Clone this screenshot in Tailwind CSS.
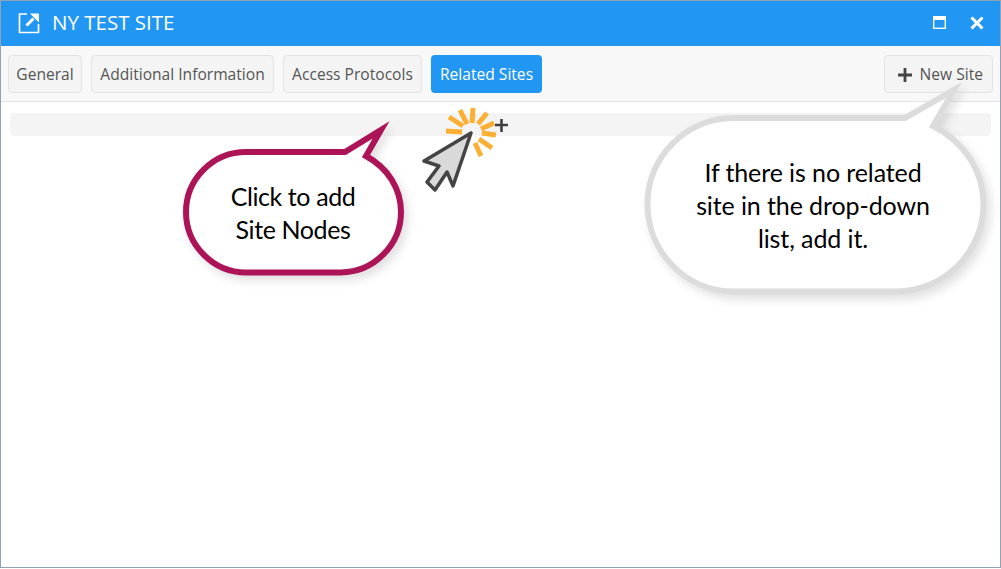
<!DOCTYPE html>
<html lang="en">
<head>
  <meta charset="UTF-8" />
  <title>NY TEST SITE</title>
  <script src="https://cdn.jsdelivr.net/npm/@tailwindcss/browser@4"></script>
</head>
<body class="bg-white font-['Open_Sans',sans-serif]">
  <div class="relative w-[1001px] h-[568px] overflow-hidden border border-[#8ea3b5] bg-white">
    <!-- Title bar -->
    <div class="flex items-center h-[45px] bg-[#2196f3] text-white pl-[17px] pr-[16px] pb-[2px]">
      <svg class="w-[22px] h-[22px]" viewBox="0 0 22 22" fill="none" stroke="#fff" stroke-width="1.7">
        <path d="M9 2H1.500V20.500H20.500V12" />
        <path d="M8.500 13.500L15.500 6.500" stroke-width="3" />
        <path d="M12 1.500H21V10.500Z" fill="#fff" stroke="none" />
      </svg>
      <span class="ml-[12px] text-[20.5px]">NY TEST SITE</span>
      <div class="ml-auto flex items-center gap-[24px]">
        <svg class="w-[13px] h-[13px]" viewBox="0 0 13 13" fill="none" stroke="#fff">
          <rect x="0.700" y="0.700" width="11.600" height="11.600" stroke-width="1.400" />
          <path d="M0.700 2.500H12.300" stroke-width="3" />
        </svg>
        <svg class="w-[14px] h-[14px]" viewBox="0 0 14 14" fill="none" stroke="#fff" stroke-width="3">
          <path d="M1.500 1.500L12.500 12.500M12.500 1.500L1.500 12.500" />
        </svg>
      </div>
    </div>

    <!-- Tabs -->
    <div class="flex items-center h-[56px] bg-[#f8f8f8] border-b border-[#e5e5e5] pl-[7px] pr-[7px] text-[15.6px] text-[#555]">
      <div class="flex gap-[9px]">
        <button class="h-[38px] w-[74px] pt-[2px] rounded-[4px] border border-[#e3e3e3] bg-[#f4f4f4]">General</button>
        <button class="h-[38px] w-[183px] pt-[2px] rounded-[4px] border border-[#e3e3e3] bg-[#f4f4f4]">Additional Information</button>
        <button class="h-[38px] w-[139px] pt-[2px] rounded-[4px] border border-[#e3e3e3] bg-[#f4f4f4]">Access Protocols</button>
        <button class="h-[38px] w-[111px] pt-[2px] rounded-[4px] bg-[#2196f3] text-white">Related Sites</button>
      </div>
      <button class="ml-auto flex items-center justify-end gap-[8px] h-[38px] w-[109px] pt-[2px] pr-[9px] rounded-[4px] border border-[#e3e3e3] bg-[#f4f4f4]">
        <svg class="w-[14px] h-[14px]" viewBox="0 0 14 14" stroke="#444" stroke-width="2.8"><path d="M7 0V14M0 7H14" /></svg>
        New Site
      </button>
    </div>

    <!-- Site nodes field -->
    <div class="mx-[9px] mt-[11px] h-[23px] rounded-[4px] bg-[#f4f4f4]"></div>

    <!-- Annotations, page coordinates (window border is 1px) -->
    <svg class="absolute left-[-1px] top-[-1px] pointer-events-none" width="1001" height="569" viewBox="0 0 1001 569" fill="none" stroke-miterlimit="12">
      <path class="drop-shadow-[4px_5px_5px_rgba(0,0,0,0.12)]" d="M246 152H345L381 130L366 156C388 168 401 189 401 212C401 245 374 272 341 272.500H246C213 272.500 186 245 186 212C186 179 213 152 246 152Z" fill="#fff" stroke="#ad1457" stroke-width="6" />
      <path class="drop-shadow-[4px_5px_5px_rgba(0,0,0,0.12)]" d="M734 118H905L954 90L933 126C965 142 983.500 172 983.500 204C983.500 252 944 291.500 896 291.500H734C686 291.500 647.500 252 647.500 204C647.500 157 686 118 734 118Z" fill="#fff" stroke="#dcdcdc" stroke-width="6" />
      <path d="M446 131L462 132M449 117L463 126M460 110L467 124M473 108L472 123M487 113L478 124M494 123L481 129M496 135L482 133M492 148L479 139M481 156L475 143" stroke="#fbb034" stroke-width="5" />
      <path d="M471 133L424 161L439 166L427 182L435 190L447 172L453 186Z" fill="#d9d9d9" stroke="#444" stroke-width="3.500" stroke-linejoin="round" />
      <path d="M495 125H508M501.500 119V132" stroke="#404040" stroke-width="2.600" />
    </svg>

    <div class="absolute left-[184px] top-[179px] w-[216px] text-center text-[25px] leading-[33px] tracking-[-0.4px] text-black font-['Lato',sans-serif]">Click to add<br>Site Nodes</div>
    <div class="absolute left-[645px] top-[155px] w-[334px] text-center text-[25px] leading-[33px] tracking-[-0.1px] text-black font-['Lato',sans-serif]">If there is no related<br>site in the drop-down<br>list, add it.</div>
  </div>
</body>
</html>
